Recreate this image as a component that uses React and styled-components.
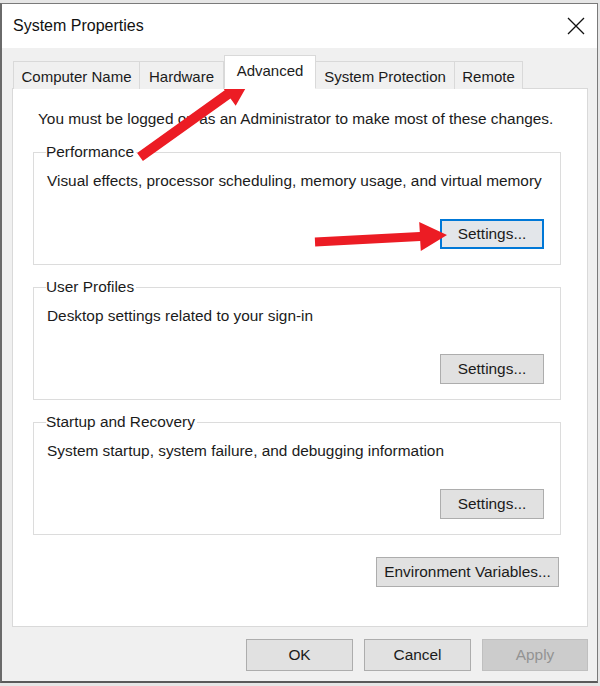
import React from "react";
import styled, { createGlobalStyle } from "styled-components";

const GlobalStyle = createGlobalStyle`
  body {
    margin: 0;
    background: #ffffff;
    font-family: "Liberation Sans", Arial, sans-serif;
    color: #1b1b1b;
  }
`;

const Page = styled.div`
  position: relative;
  width: 600px;
  height: 686px;
  padding-top: 3px;
  box-sizing: border-box;
  background: #e6e6e6;
`;

const Window = styled.div`
  width: 598px;
  height: 680px;
  box-sizing: border-box;
  border: 1px solid #7a7a7a;
  border-left: 2px solid #6a6a6a;
  border-bottom: 2px solid #5a5a5a;
  background: #f0f0f0;
  display: flex;
  flex-direction: column;
`;

const TitleBar = styled.div`
  height: 44px;
  background: #ffffff;
  display: flex;
  align-items: center;
  justify-content: space-between;
  padding: 0 12px 0 11px;
  font-size: 16px;
  color: #111;
`;

const Body = styled.div`
  flex: 1;
  display: flex;
  flex-direction: column;
  padding: 8px 9px 0 10px;
`;

const TabRow = styled.div`
  display: flex;
  align-items: flex-end;
  margin-left: 1px;
  height: 33px;
  position: relative;
  z-index: 1;
  margin-bottom: -1px;
`;

const Tab = styled.div`
  width: ${(p) => p.$w}px;
  height: ${(p) => (p.$active ? 34 : 28)}px;
  box-sizing: border-box;
  border: 1px solid #d9d9d9;
  border-bottom: ${(p) => (p.$active ? "1px solid #ffffff" : "none")};
  border-left: ${(p) => (p.$first || p.$active ? "1px solid #d9d9d9" : "none")};
  background: ${(p) => (p.$active ? "#ffffff" : "#f0f0f0")};
  display: flex;
  align-items: ${(p) => (p.$active ? "flex-start" : "center")};
  justify-content: center;
  padding-top: ${(p) => (p.$active ? "6px" : "1px")};
  font-size: 15px;
  color: #1b1b1b;
  margin-top: ${(p) => (p.$active ? "-5px" : "0")};
`;

const Panel = styled.div`
  height: 539px;
  box-sizing: border-box;
  background: #ffffff;
  border: 1px solid #d9d9d9;
  padding: 20px 26px 0 20px;
  display: flex;
  flex-direction: column;
`;

const Note = styled.div`
  font-size: 15.4px;
  line-height: 20px;
  margin-left: 5px;
  margin-bottom: 13px;
`;

const Group = styled.fieldset`
  margin: 0 0 12px 0;
  border: 1px solid #dcdcdc;
  padding: 0 16px 15px 13px;
  display: flex;
  flex-direction: column;
  min-width: 0;
`;

const Legend = styled.legend`
  font-size: 15.4px;
  line-height: 20px;
  padding: 0 2px 0 0;
  margin-left: -1px;
`;

const Desc = styled.div`
  font-size: 15.4px;
  line-height: 20px;
  margin-top: 9px;
`;

const GroupFooter = styled.div`
  display: flex;
  justify-content: flex-end;
  margin-top: 28px;
`;

const Button = styled.div`
  width: ${(p) => p.$w}px;
  height: ${(p) => p.$h || 30}px;
  box-sizing: border-box;
  border: ${(p) =>
    p.$focused ? "2px solid #0078d7" : p.$disabled ? "1px solid #bfbfbf" : "1px solid #adadad"};
  background: ${(p) => (p.$disabled ? "#cccccc" : p.$focused ? "#e3e6ea" : "#e1e1e1")};
  color: ${(p) => (p.$disabled ? "#939393" : "#1b1b1b")};
  display: flex;
  align-items: center;
  justify-content: center;
  font-size: 15.4px;
`;

const EnvRow = styled.div`
  display: flex;
  justify-content: flex-end;
  margin-top: 10px;
  padding-right: 2px;
`;

const Footer = styled.div`
  display: flex;
  justify-content: flex-end;
  gap: 11px;
  margin-top: 12px;
`;

const Overlay = styled.svg`
  position: absolute;
  left: 0;
  top: 0;
  pointer-events: none;
`;

const tabs = [
  { label: "Computer Name", w: 127 },
  { label: "Hardware", w: 84 },
  { label: "Advanced", w: 92, active: true },
  { label: "System Protection", w: 139 },
  { label: "Remote", w: 68 },
];

const groups = [
  {
    title: "Performance",
    desc: "Visual effects, processor scheduling, memory usage, and virtual memory",
    focused: true,
  },
  { title: "User Profiles", desc: "Desktop settings related to your sign-in" },
  {
    title: "Startup and Recovery",
    desc: "System startup, system failure, and debugging information",
  },
];

export default function App() {
  return (
    <Page>
      <GlobalStyle />
      <Window>
        <TitleBar>
          <span>System Properties</span>
          <svg width="18" height="18" viewBox="0 0 18 18">
            <path d="M1 1L17 17M17 1L1 17" stroke="#111" strokeWidth="1.3" />
          </svg>
        </TitleBar>
        <Body>
          <TabRow>
            {tabs.map((t, i) => (
              <Tab key={t.label} $w={t.w} $active={t.active} $first={i === 0}>
                {t.label}
              </Tab>
            ))}
          </TabRow>
          <Panel>
            <Note>
              You must be logged on as an Administrator to make most of these changes.
            </Note>
            {groups.map((g) => (
              <Group key={g.title}>
                <Legend>{g.title}</Legend>
                <Desc>{g.desc}</Desc>
                <GroupFooter>
                  <Button $w={104} $focused={g.focused}>
                    Settings...
                  </Button>
                </GroupFooter>
              </Group>
            ))}
            <EnvRow>
              <Button $w={183}>Environment Variables...</Button>
            </EnvRow>
          </Panel>
          <Footer>
            <Button $w={107} $h={32}>OK</Button>
            <Button $w={107} $h={32}>Cancel</Button>
            <Button $w={106} $h={32} $disabled>
              Apply
            </Button>
          </Footer>
        </Body>
      </Window>
      <Overlay width="600" height="686" viewBox="0 0 600 686">
        <polygon
          fill="#ec1c24"
          points="137.1,152.9 224.7,90.3 219.5,83 252,77 235.7,105.8 230.5,98.5 142.9,161.1"
        />
        <polygon
          fill="#ec1c24"
          points="314.8,237.5 419.8,231.9 419.2,221.9 447,235 420.8,250.9 420.2,240.9 315.2,246.5"
        />
      </Overlay>
    </Page>
  );
}
